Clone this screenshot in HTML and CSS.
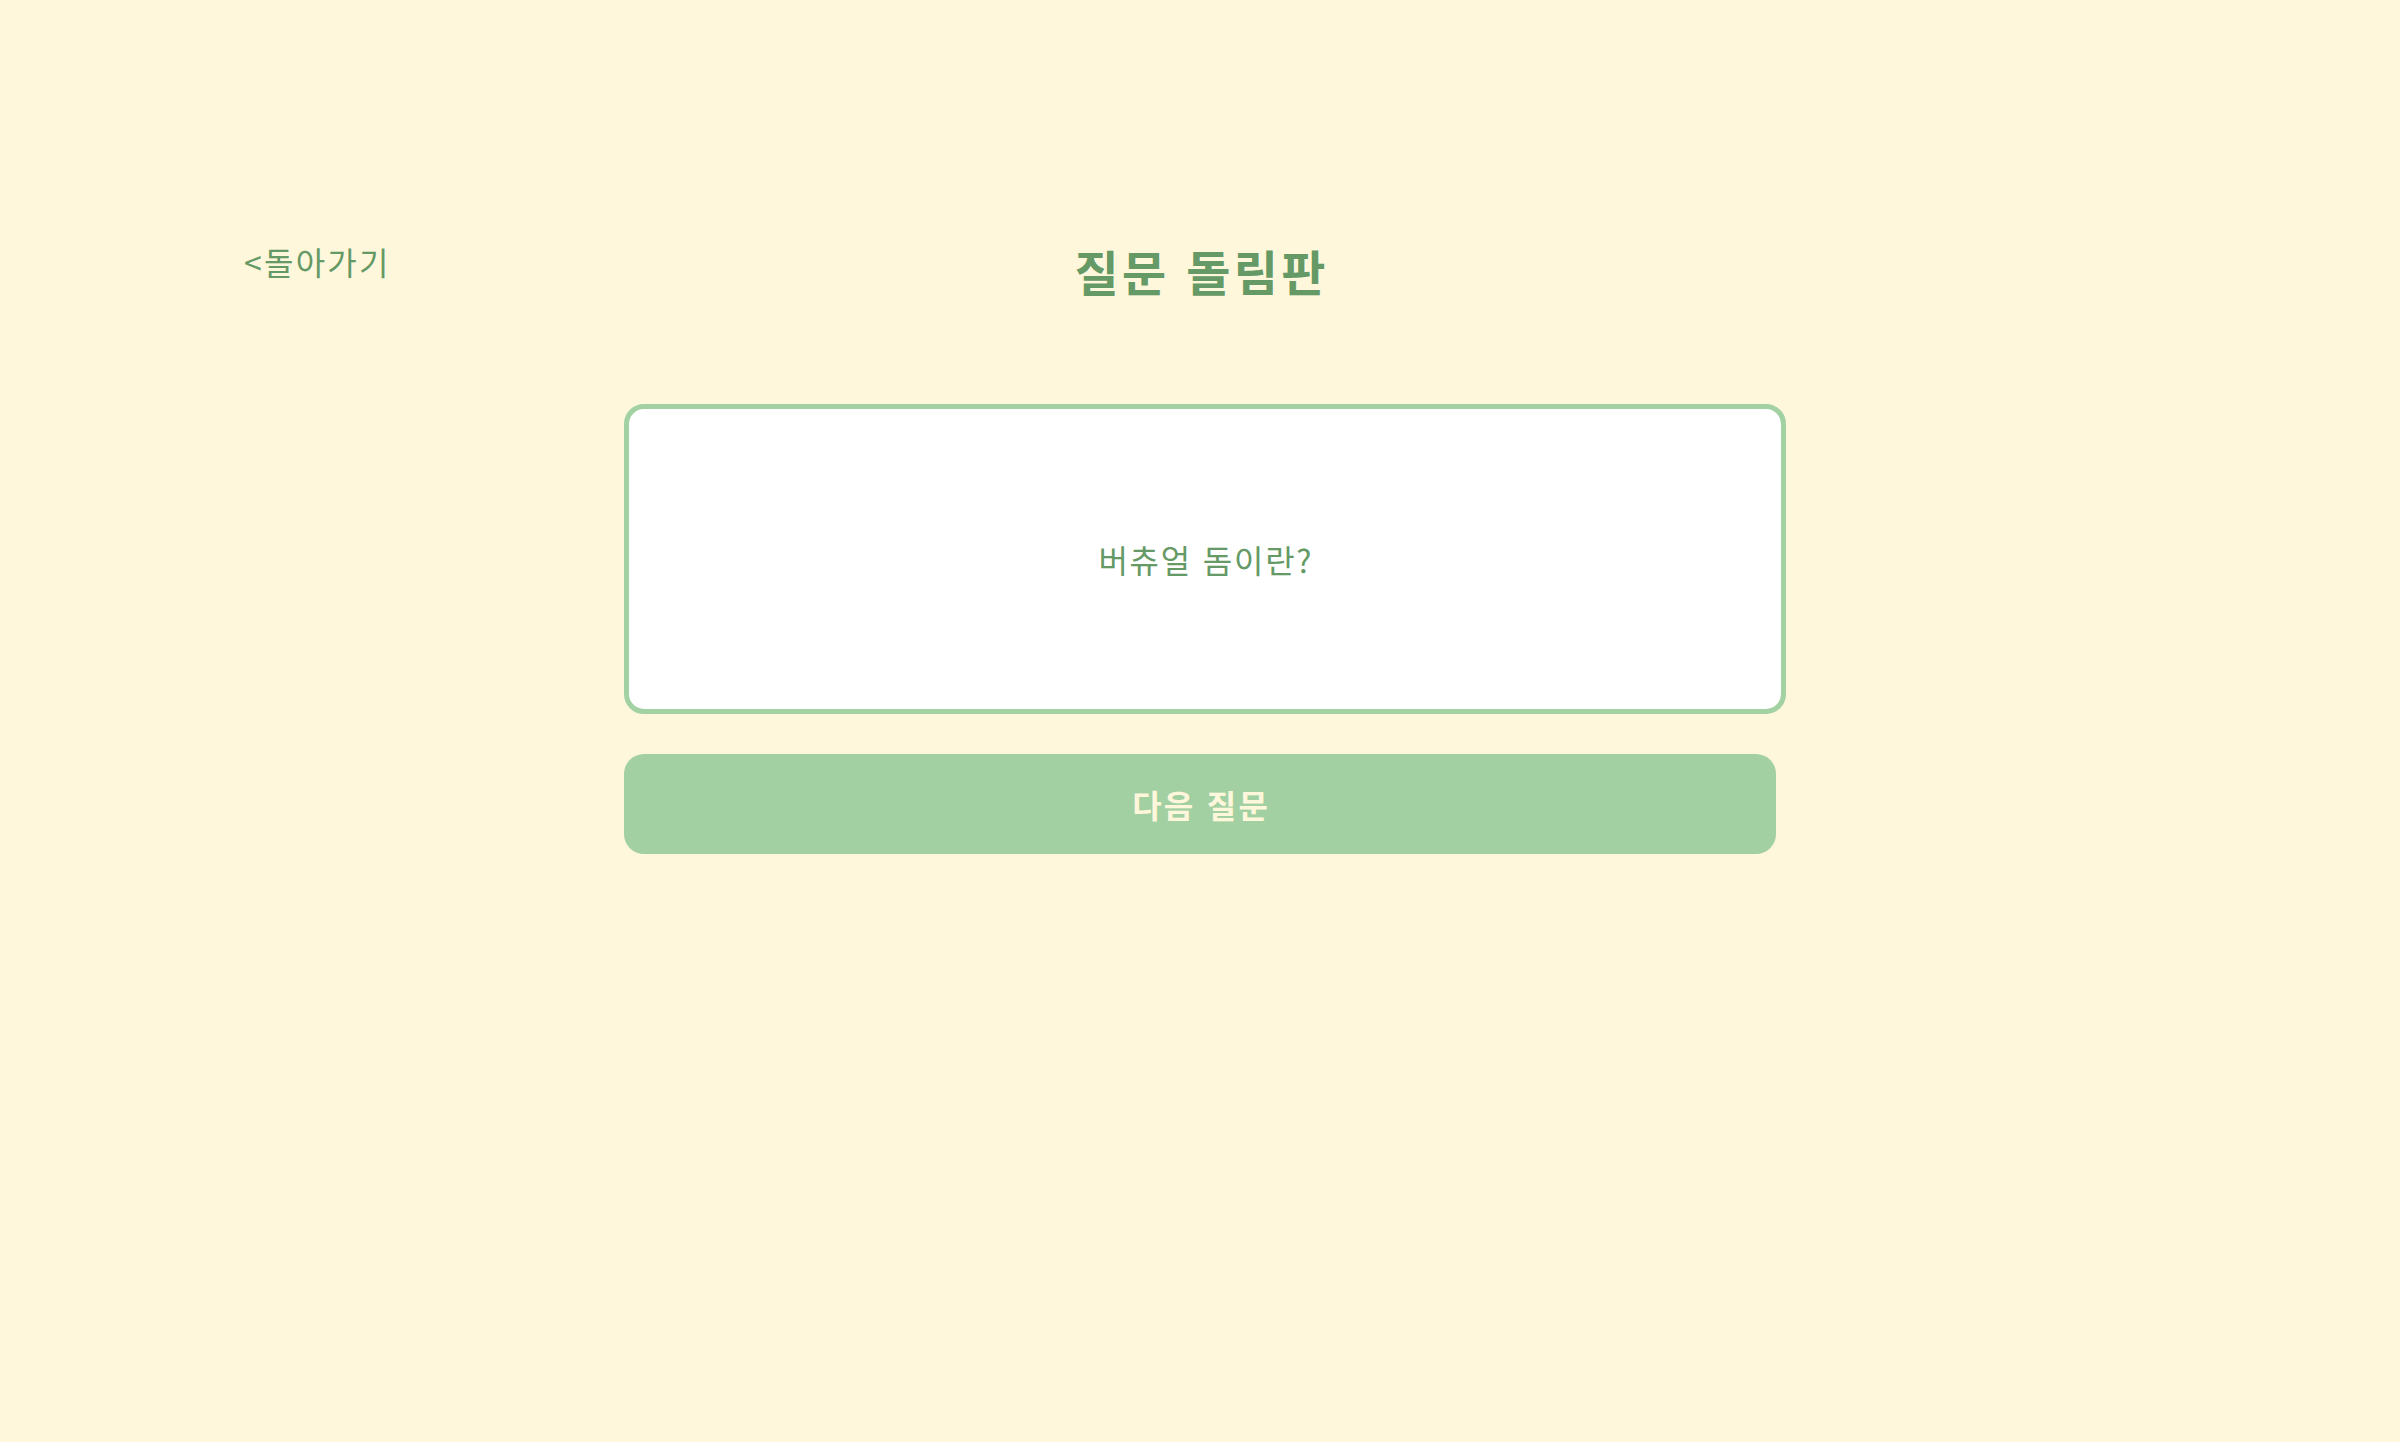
FILE: index.html
```html
<!DOCTYPE html>
<html lang="ko">
<head>
<meta charset="utf-8">
<title>질문 돌림판</title>
<link rel="stylesheet" href="styles.css">
</head>
<body>
<div class="page">
  <header class="header">
    <a class="back" href="#">&lt;돌아가기</a>
    <h1 class="title">질문 돌림판</h1>
    <div class="spacer"></div>
  </header>
  <main class="main">
    <div class="card">
      <p class="question">버츄얼 돔이란?</p>
    </div>
    <button class="next" type="button">다음 질문</button>
  </main>
</div>
</body>
</html>
```

FILE: styles.css
```css
html, body {
  margin: 0;
  padding: 0;
}
body {
  background: #fff7dc;
  font-family: "Noto Sans CJK KR", "Noto Sans", sans-serif;
  color: #659965;
  min-height: 1442px;
}
.page {
  padding-top: 237px;
}
.header {
  display: grid;
  grid-template-columns: 1fr auto 1fr;
  align-items: start;
  padding: 0 244px;
}
.back {
  justify-self: start;
  font-size: 32px;
  line-height: 48px;
  letter-spacing: 0.07em;
  color: #659965;
  text-decoration: none;
}
.title {
  margin: -3px 0 3px;
  padding-left: 0.07em;
  font-size: 48px;
  line-height: 72px;
  font-weight: 700;
  letter-spacing: 0.07em;
  color: #659965;
}
.main {
  width: 1152px;
  margin: 95px auto 0;
  display: flex;
  flex-direction: column;
  gap: 40px;
}
.card {
  width: 1152px;
  height: 300px;
  box-sizing: content-box;
  background: #ffffff;
  border: 5px solid #a2d1a3;
  border-radius: 20px;
  display: flex;
  align-items: center;
  justify-content: center;
}
.question {
  margin: 0;
  padding-left: 0.055em;
  font-size: 32px;
  line-height: 48px;
  letter-spacing: 0.055em;
  color: #659965;
}
.next {
  width: 1152px;
  height: 100px;
  border: none;
  border-radius: 20px;
  background: #a3d0a3;
  color: #fff7dc;
  font-family: "Noto Sans CJK KR", "Noto Sans", sans-serif;
  font-size: 32px;
  font-weight: 700;
  letter-spacing: 0.07em;
  text-indent: 0.07em;
  cursor: pointer;
  padding: 0;
}
```
